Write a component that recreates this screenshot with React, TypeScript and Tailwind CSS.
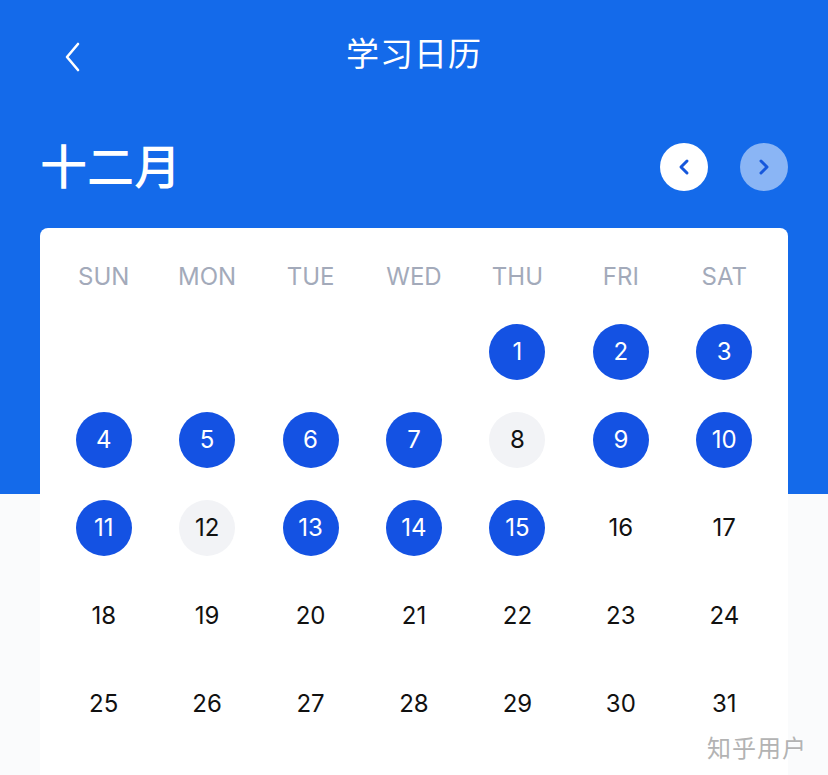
import React from 'react';

const weekdays = ['SUN', 'MON', 'TUE', 'WED', 'THU', 'FRI', 'SAT'];
const studied = [1, 2, 3, 4, 5, 6, 7, 9, 10, 11, 13, 14, 15];
const missed = [8, 12];

function DayCell({ day }: { day: number | null }) {
  if (day === null) return <div className="h-[88px]" />;
  let circle = 'text-[#111111]';
  if (studied.includes(day)) circle = 'bg-[#1452e3] text-white';
  else if (missed.includes(day)) circle = 'bg-[#f2f3f6] text-[#111111]';
  return (
    <div className="h-[88px] flex items-center justify-center">
      <div className={`w-14 h-14 rounded-full flex items-center justify-center text-[24px] ${circle}`}>
        {day}
      </div>
    </div>
  );
}

export default function App() {
  const cells: (number | null)[] = [null, null, null, null];
  for (let d = 1; d <= 31; d++) cells.push(d);

  return (
    <div
      className="relative min-h-[775px] overflow-hidden bg-[linear-gradient(to_bottom,#146aea_494px,#fafbfc_494px)]"
      style={{ fontFamily: 'Inter, "Noto Sans CJK SC", sans-serif' }}
    >
      {/* nav bar */}
      <div className="relative h-[106px] flex items-center justify-center">
        <button className="absolute left-[57px] top-[36px] p-1" type="button" aria-label="返回">
          <svg width="22" height="34" viewBox="0 0 22 34" fill="none">
            <path d="M17 4 L6 17 L17 30" stroke="white" strokeWidth="2.6" strokeLinecap="round" strokeLinejoin="round" />
          </svg>
        </button>
        <div className="text-white text-[33px] tracking-[1px]" style={{ fontFamily: '"Noto Sans CJK SC", sans-serif' }}>
          学习日历
        </div>
      </div>

      {/* month row */}
      <div className="h-[122px] flex items-center justify-between px-[40px]">
        <div className="text-white text-[47px] font-medium leading-none pb-2" style={{ fontFamily: '"Noto Sans CJK SC", sans-serif' }}>
          十二月
        </div>
        <div className="flex items-center gap-8">
          <button type="button" className="w-12 h-12 rounded-full bg-white flex items-center justify-center">
            <svg width="14" height="18" viewBox="0 0 14 18" fill="none">
              <path d="M10 3 L4 9 L10 15" stroke="#1657dc" strokeWidth="3" strokeLinecap="round" strokeLinejoin="round" />
            </svg>
          </button>
          <button type="button" className="w-12 h-12 rounded-full bg-white/50 flex items-center justify-center">
            <svg width="14" height="18" viewBox="0 0 14 18" fill="none">
              <path d="M4 3 L10 9 L4 15" stroke="#1657dc" strokeWidth="3" strokeLinecap="round" strokeLinejoin="round" />
            </svg>
          </button>
        </div>
      </div>

      {/* calendar card */}
      <div className="mx-[40px] bg-white rounded-lg px-3 pt-6 pb-12">
        <div className="grid grid-cols-7 h-12 items-center">
          {weekdays.map(w => (
            <div key={w} className="text-center text-[24px] text-[#a3aaba] pt-0.5">{w}</div>
          ))}
        </div>
        <div className="grid grid-cols-7 mt-2">
          {cells.map((d, i) => (
            <DayCell key={i} day={d} />
          ))}
        </div>
      </div>

      {/* watermark */}
      <div
        className="absolute left-[707px] top-[729px] text-[24px] text-[#b3b3b3] tracking-[1px]"
        style={{ fontFamily: '"Noto Sans CJK SC", sans-serif', textShadow: '1px 1px 0 rgba(255,255,255,0.8)' }}
      >
        知乎用户
      </div>
    </div>
  );
}
